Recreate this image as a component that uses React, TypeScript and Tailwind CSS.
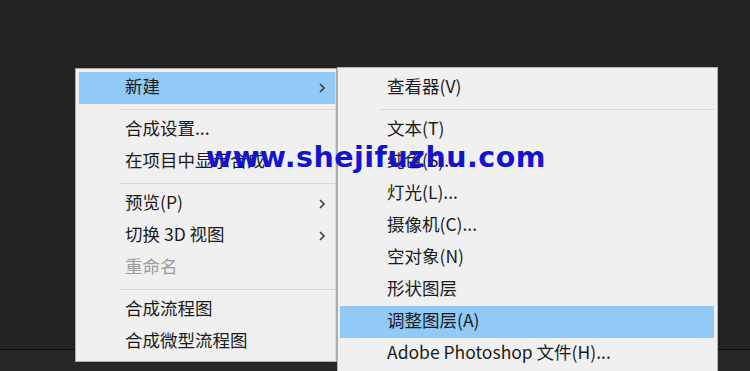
type Item =
  | { kind: "item"; label: string; sub?: boolean; active?: boolean; disabled?: boolean }
  | { kind: "sep" };

const leftMenu: Item[] = [
  { kind: "item", label: "新建", sub: true, active: true },
  { kind: "sep" },
  { kind: "item", label: "合成设置..." },
  { kind: "item", label: "在项目中显示合成" },
  { kind: "sep" },
  { kind: "item", label: "预览(P)", sub: true },
  { kind: "item", label: "切换 3D 视图", sub: true },
  { kind: "item", label: "重命名", disabled: true },
  { kind: "sep" },
  { kind: "item", label: "合成流程图" },
  { kind: "item", label: "合成微型流程图" },
];

const rightMenu: Item[] = [
  { kind: "item", label: "查看器(V)" },
  { kind: "sep" },
  { kind: "item", label: "文本(T)" },
  { kind: "item", label: "纯色(S)..." },
  { kind: "item", label: "灯光(L)..." },
  { kind: "item", label: "摄像机(C)..." },
  { kind: "item", label: "空对象(N)" },
  { kind: "item", label: "形状图层" },
  { kind: "item", label: "调整图层(A)", active: true },
  { kind: "item", label: "Adobe Photoshop 文件(H)..." },
];

function Chevron() {
  return (
    <svg width="8" height="12" viewBox="0 0 8 12" className="shrink-0">
      <path d="M2 2l4 4-4 4" fill="none" stroke="#3c3c3c" strokeWidth="1.6" />
    </svg>
  );
}

function Menu({ items, indent, sepStart }: { items: Item[]; indent: string; sepStart: string }) {
  return (
    <div className="flex flex-col">
      {items.map((it, i) =>
        it.kind === "sep" ? (
          <div key={i} className="h-[10px] flex items-center">
            <div className={`${sepStart} h-px flex-1 bg-[#d6d6d6]`} />
          </div>
        ) : (
          <div
            key={i}
            className={`h-[32px] flex items-center ${indent} pr-[9px] ${
              it.active ? "bg-[#91c9f7]" : ""
            } ${it.disabled ? "text-[#9a9a9a]" : "text-[#1b1b1b]"}`}
          >
            <span className="flex-1 whitespace-nowrap mb-[4px]">{it.label}</span>
            {it.sub && <Chevron />}
          </div>
        )
      )}
    </div>
  );
}

export default function App() {
  return (
    <div
      className="relative w-[750px] h-[371px] overflow-hidden bg-[#232323] text-[17.5px] leading-none"
      style={{ fontFamily: '"Microsoft YaHei", "Noto Sans CJK SC", "Noto Sans", sans-serif' }}
    >
      {/* panel edge behind the popups */}
      <div className="flex flex-col h-full">
        <div className="h-[349px]" />
        <div className="h-px bg-[#0e0e0e]" />
        <div className="flex-1 bg-[#262626]" />
      </div>

      {/* context menu */}
      <div className="absolute left-[75px] top-[68px] w-[262px] h-[294px] bg-[#f0f0f0] border border-[#a9a9a9] pt-[3px] pl-[3px] pr-px">
        <Menu items={leftMenu} indent="pl-[46px]" sepStart="ml-[41px]" />
      </div>
      <div className="absolute left-[335px] top-[72px] w-px h-[290px] bg-[#dadada]" />

      {/* submenu */}
      <div className="absolute left-[337px] top-[67px] w-[381px] h-[320px] bg-[#f0f0f0] border border-[#b4b4b4] pt-[4px] pl-[2px] pr-[3px]">
        <Menu items={rightMenu} indent="pl-[47px]" sepStart="ml-[40px]" />
      </div>

      {/* watermark */}
      <div
        className="absolute left-[206px] top-[144px] text-[28.5px] font-bold text-[#1414cc] whitespace-nowrap leading-none tracking-[0.5px]"
        style={{ fontFamily: '"DejaVu Sans", sans-serif' }}
      >
        www.shejifuzhu.com
      </div>
    </div>
  );
}
